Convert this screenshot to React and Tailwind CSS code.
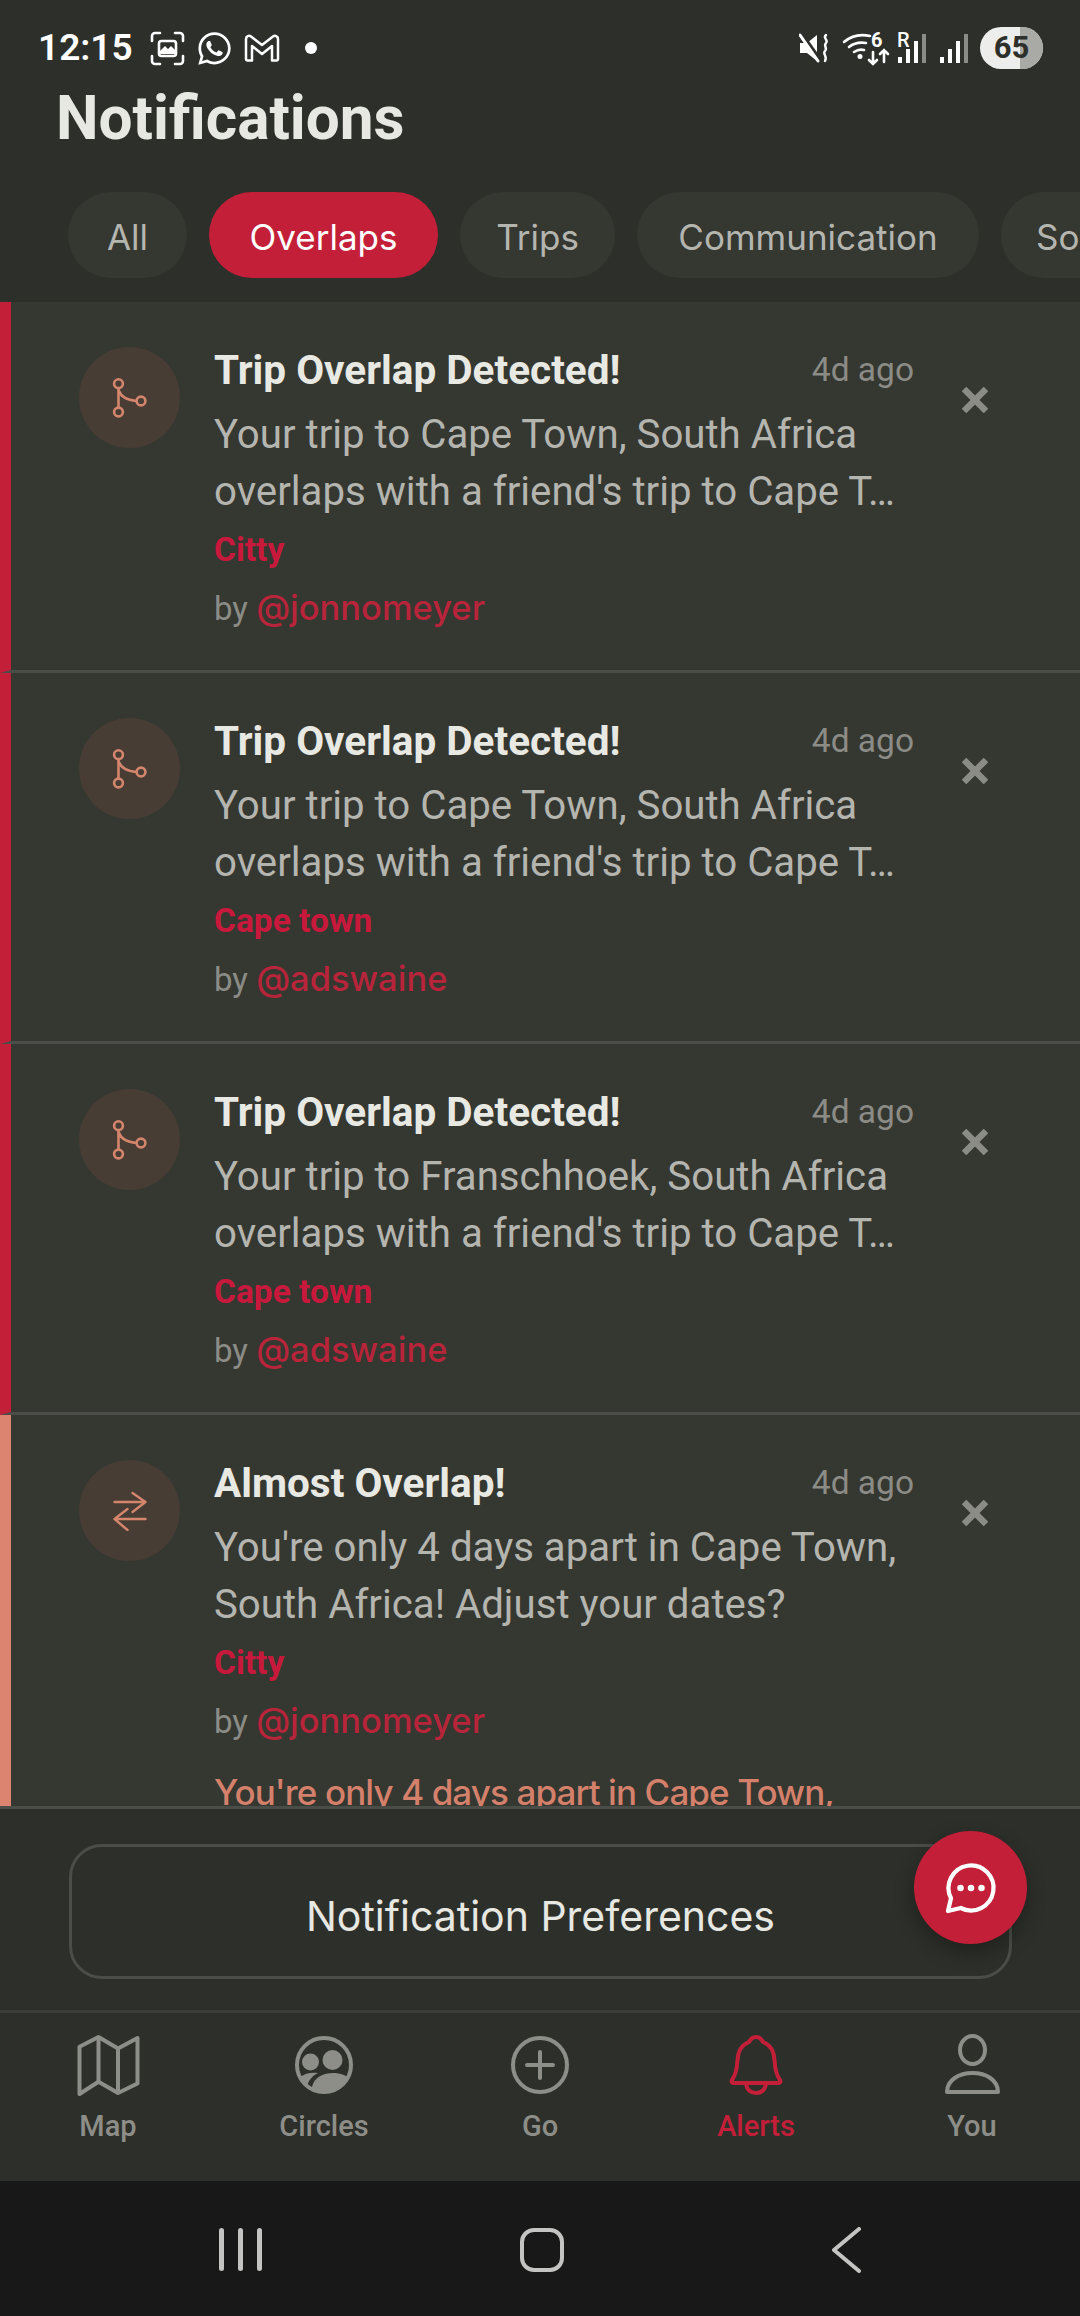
import React from 'react';
import { FaWhatsapp } from 'react-icons/fa';

const PILLS = [
  { label: 'All', width: 'w-[119px]' },
  { label: 'Overlaps', width: 'w-[229px]', active: true },
  { label: 'Trips', width: 'w-[155px]' },
  { label: 'Communication', width: 'w-[342px]' },
  { label: 'Social', width: 'w-[170px]' },
];

const CARDS = [
  { title: 'Trip Overlap Detected!', body: "Your trip to Cape Town, South Africa overlaps with a friend's trip to Cape T…", trip: 'Citty', user: '@jonnomeyer' },
  { title: 'Trip Overlap Detected!', body: "Your trip to Cape Town, South Africa overlaps with a friend's trip to Cape T…", trip: 'Cape town', user: '@adswaine' },
  { title: 'Trip Overlap Detected!', body: "Your trip to Franschhoek, South Africa overlaps with a friend's trip to Cape T…", trip: 'Cape town', user: '@adswaine' },
  { title: 'Almost Overlap!', body: "You're only 4 days apart in Cape Town, South Africa! Adjust your dates?", trip: 'Citty', user: '@jonnomeyer', almost: true, note: "You're only 4 days apart in Cape Town," },
];

function StatusLeft() {
  return (
    <div className="flex items-center text-white">
      <span className="ml-[38px] w-[92px] text-[37px] leading-[44px] font-semibold font-['Roboto',sans-serif]">12:15</span>
      {/* screenshot */}
      <svg className="ml-[20px]" width="35" height="35" viewBox="0 0 35 35" fill="none" stroke="#fff" strokeWidth="2.6" strokeLinecap="round">
        <path d="M2 10V5a3 3 0 0 1 3-3h5M25 2h5a3 3 0 0 1 3 3v5M33 25v5a3 3 0 0 1-3 3h-5M10 33H5a3 3 0 0 1-3-3v-5" />
        <rect x="9" y="10" width="17" height="15" rx="2.5" fill="#2d2f2a" />
        <path d="M10 20l5-5 3 3 3-3 4 4v4H10z" fill="#fff" stroke="none" />
      </svg>
      <FaWhatsapp className="ml-[11px]" size={37} color="#fff" />
      <svg className="ml-[11px]" width="36" height="28" viewBox="0 0 36 28" fill="none" stroke="#fff" strokeWidth="2.5" strokeLinejoin="round">
        <path d="M2 5v20a1.500 1.500 0 0 0 1.500 1.500H8V12l10 8 10-8v14.500h4.500A1.500 1.500 0 0 0 34 25V5c0-3-3-4-5-2.500L18 11 7 2.500C5 1 2 2 2 5z" />
      </svg>
      <span className="ml-[25px] w-[12px] h-[12px] rounded-full bg-white" />
    </div>
  );
}

function StatusRight() {
  return (
    <div className="flex items-center text-white">
      {/* mute */}
      <svg width="30" height="30" viewBox="0 0 30 30" fill="none">
        <path d="M1 10h7l10-8v26L8 20H1z" fill="#fff" />
        <path d="M3 1l19 27" stroke="#2d2f2a" strokeWidth="3.500" />
        <path d="M1 2l18 26" stroke="#fff" strokeWidth="3" strokeLinecap="round" />
        <path d="M27 2c-4 3 3 5 0 8s2 5-1 8 3 5 0 10" stroke="#fff" strokeWidth="2.4" strokeLinecap="round" />
      </svg>
      {/* wifi 6 */}
      <div className="relative ml-[14px] w-[44px] h-[32px]">
        <svg className="absolute left-0 top-0 overflow-visible" width="44" height="32" viewBox="0 0 44 32" fill="none" stroke="#fff" strokeWidth="2.6" strokeLinecap="round">
          <path d="M1 10c7-6 17-8 26-6" />
          <path d="M6 15c5-4 11-5 17-4" />
          <path d="M11 20c3-2 6-3 10-2" />
          <circle cx="17" cy="24.500" r="1.200" fill="#fff" />
          <path d="M30 20v12M26 28l4 4 4-4" />
          <path d="M41 30V18M37 22l4-4 4 4" />
        </svg>
        <span className="absolute left-[28px] top-[-1px] text-[20px] leading-[18px] font-bold font-['Roboto',sans-serif]">6</span>
      </div>
      {/* signal with R */}
      <div className="relative ml-[8px] w-[29px] h-[30px]">
        <span className="absolute left-[2px] top-[-2px] text-[20px] leading-[18px] font-medium font-['Roboto',sans-serif]">R</span>
        <div className="absolute left-[3px] bottom-0 flex items-end gap-[4px]">
          <span className="w-[4px] h-[6px] bg-white" />
          <span className="w-[4px] h-[14px] bg-white" />
          <span className="w-[4px] h-[22px] bg-white" />
          <span className="w-[4px] h-[29px] bg-[#8a8c87]" />
        </div>
      </div>
      {/* signal */}
      <div className="ml-[16px] flex items-end gap-[4px] h-[30px]">
        <span className="w-[4px] h-[6px] bg-white" />
        <span className="w-[4px] h-[14px] bg-white" />
        <span className="w-[4px] h-[22px] bg-white" />
        <span className="w-[4px] h-[29px] bg-[#8a8c87]" />
      </div>
      {/* battery */}
      <div className="relative ml-[12px] w-[63px] h-[42px] rounded-[21px] overflow-hidden bg-[#ededeb] flex items-center justify-center">
        <span className="absolute right-0 top-0 bottom-0 w-[23px] bg-[#a9a9a6]" />
        <span className="relative text-[#2d2f2a] text-[31px] leading-[42px] font-bold font-['Roboto',sans-serif]">65</span>
      </div>
    </div>
  );
}

function SplitIcon() {
  return (
    <svg width="40" height="40" viewBox="0 0 40 40" fill="none" stroke="#d4866c" strokeWidth="2.6" strokeLinecap="round">
      <circle cx="8.500" cy="5.700" r="4.400" />
      <circle cx="31" cy="23" r="4.400" />
      <circle cx="8.500" cy="34" r="4.400" />
      <path d="M8.500 10v19.500" />
      <path d="M9 13c2 6 8 9 17.500 10" />
    </svg>
  );
}

function SwapIcon() {
  return (
    <svg width="40" height="40" viewBox="0 0 40 40" fill="none" stroke="#d4866c" strokeWidth="2.4" strokeLinecap="round" strokeLinejoin="round">
      <path d="M4.500 11h31M22.500 2l13 9-13 10" />
      <path d="M35.500 28h-31M17.500 18L4.500 28l13 11" />
    </svg>
  );
}

function Card({ title, body, trip, user, almost, note }) {
  return (
    <div className={`flex-shrink-0 flex bg-[#353731] border-l-[11px] pl-[68px] pt-[45px] ${almost ? 'border-[#dd8470] h-[420px]' : 'border-[#c41f38] border-b-[3px] border-b-[#4b4d48] h-[371px]'}`}>
      <div className="w-[101px] h-[101px] rounded-full bg-[#473d35] flex items-center justify-center flex-shrink-0">
        {almost ? <SwapIcon /> : <SplitIcon />}
      </div>
      <div className="ml-[34px] w-[700px] pt-[1px] flex-shrink-0 font-['Roboto',sans-serif]">
        <div className="flex items-center justify-between h-[44px]">
          <span className="text-[40.500px] leading-[44px] font-bold text-[#e9e9e4]">{title}</span>
          <span className="text-[33.500px] leading-[44px] text-[#8c8c87]">4d ago</span>
        </div>
        <p className="mt-[14px] text-[40.200px] leading-[57px] text-[#b5b5b0]">{body}</p>
        <p className="mt-[8px] text-[33.500px] leading-[44px] font-bold text-[#c8193c]">{trip}</p>
        <p className="mt-[14px] text-[33px] leading-[44px] text-[#8c8c87]">
          by <span className="text-[34.500px] font-medium text-[#b8243a] font-['Inter',sans-serif]">{user}</span>
        </p>
        {note && <p className="mt-[26px] text-[35px] tracking-[-0.9px] leading-[44px] font-medium text-[#d4806a] font-['Inter',sans-serif]">{note}</p>}
      </div>
      <svg className="ml-[48px] mt-[40px] flex-shrink-0" width="26" height="26" viewBox="0 0 26 26" stroke="#8c8c87" strokeWidth="6.500">
        <path d="M2 2l22 22M24 2L2 24" />
      </svg>
    </div>
  );
}

function NavItem({ label, active, children }) {
  return (
    <div className={`flex flex-col items-center ${active ? 'text-[#c41f38]' : 'text-[#8e8e89]'}`}>
      <div className="h-[62px] flex items-center justify-center">{children}</div>
      <span className="mt-[12px] text-[29px] leading-[36px] font-medium font-['Roboto',sans-serif]">{label}</span>
    </div>
  );
}

export default function App() {
  return (
    <div className="relative w-[1080px] h-[2316px] overflow-hidden flex flex-col bg-[#2d2f2a]">
      <div className="h-[96px] flex items-center justify-between pr-[37px] flex-shrink-0">
        <StatusLeft />
        <StatusRight />
      </div>

      <h1 className="pl-[56px] h-[46px] text-[60.300px] leading-[46px] font-bold text-[#e8e8e3] font-['Roboto',sans-serif] flex-shrink-0">Notifications</h1>

      <div className="mt-[50px] mb-[24px] pl-[68px] flex gap-[22px] overflow-hidden flex-shrink-0">
        {PILLS.map(p => (
          <div
            key={p.label}
            className={`h-[86px] pt-[4px] rounded-full flex items-center justify-center flex-shrink-0 text-[35px] font-['Inter',sans-serif] ${p.width} ${p.active ? 'bg-[#c41f38] text-white' : 'bg-[#353731] text-[#b5b5b0]'}`}
          >
            {p.label}
          </div>
        ))}
      </div>

      <div className="flex-1 min-h-0 overflow-hidden flex flex-col border-b-[3px] border-[#4b4d48]">
        {CARDS.map((c, i) => <Card key={i} {...c} />)}
      </div>

      <div className="h-[204px] flex-shrink-0 pt-[35px] pl-[69px] border-b-[3px] border-[#3b3d38]">
        <button className="w-[943px] h-[135px] pt-[11px] rounded-[33px] border-[3px] border-[#4b4d48] text-[41px] text-[#e8e8e3] font-['Inter',sans-serif]">
          Notification Preferences
        </button>
      </div>

      <div className="h-[168px] flex-shrink-0 grid grid-cols-5 pt-[21px]">
        <NavItem label="Map">
          <svg width="63" height="62" viewBox="0 0 63 62" fill="none" stroke="currentColor" strokeWidth="4" strokeLinejoin="round">
            <path d="M2.500 12.700L21.500 3 41 14.500 60.500 4v45.500L41 59 21.500 47.700 2.500 60z" />
            <path d="M21.500 3v44.700M41 14.500V59" />
          </svg>
        </NavItem>
        <NavItem label="Circles">
          <svg width="60" height="60" viewBox="0 0 60 60" fill="none">
            <defs>
              <clipPath id="circlesClip"><circle cx="30" cy="30" r="27" /></clipPath>
            </defs>
            <circle cx="30" cy="30" r="27" stroke="currentColor" strokeWidth="4" />
            <circle cx="16.500" cy="27" r="8.500" fill="currentColor" />
            <circle cx="38.500" cy="25" r="10" fill="currentColor" />
            <g clipPath="url(#circlesClip)" fill="currentColor">
              <path d="M18 52c2-10 12-14 21-14 8 0 15 3 19 8v14H18z" />
              <path d="M6 42c5-4 12-5 18-4-6 3-10 8-11 14l-9-2z" />
            </g>
          </svg>
        </NavItem>
        <NavItem label="Go">
          <svg width="60" height="60" viewBox="0 0 60 60" fill="none" stroke="currentColor" strokeWidth="4" strokeLinecap="round">
            <circle cx="30" cy="30" r="27" />
            <path d="M30 17v26M17 30h26" />
          </svg>
        </NavItem>
        <NavItem label="Alerts" active>
          <svg width="54" height="62" viewBox="0 0 54 62" fill="none" stroke="currentColor" strokeWidth="4" strokeLinejoin="round" strokeLinecap="round">
            <path d="M27 3c4 0 6 3 7 5 8 3 11 10 11.500 18 .5 10 2.500 16 5.500 20 1 2 0 3-2 3H5c-2 0-3-1-2-3 3-4 5-10 5.500-20C9 18 12 11 20 8c1-2 3-5 7-5z" />
            <path d="M17 50c1 6 5 9 10 9s9-3 10-9" />
          </svg>
        </NavItem>
        <NavItem label="You">
          <svg width="57" height="62" viewBox="0 0 57 62" fill="none" stroke="currentColor" strokeWidth="4" strokeLinejoin="round">
            <ellipse cx="28.500" cy="16" rx="12.500" ry="14" />
            <path d="M3 58c0-12 12-19 25.500-19S54 46 54 58z" />
          </svg>
        </NavItem>
      </div>

      <div className="h-[135px] flex-shrink-0 pt-[2px] bg-[#171817] flex items-center justify-center">
        <div className="flex items-center w-[642px] justify-between">
          <div className="flex gap-[14px]">
            <span className="w-[5px] h-[43px] rounded-full bg-[#c4c4c2]" />
            <span className="w-[5px] h-[43px] rounded-full bg-[#c4c4c2]" />
            <span className="w-[5px] h-[43px] rounded-full bg-[#c4c4c2]" />
          </div>
          <span className="mr-[9px] w-[44px] h-[44px] rounded-[14px] border-[4px] border-[#c4c4c2]" />
          <svg width="30" height="46" viewBox="0 0 30 46" fill="none" stroke="#c4c4c2" strokeWidth="4" strokeLinecap="round" strokeLinejoin="round">
            <path d="M28 2L3 23l25 21" />
          </svg>
        </div>
      </div>

      {/* chat bubble */}
      <div className="absolute left-[914px] top-[1831px] w-[113px] h-[113px] rounded-full bg-[#c41f38] flex items-center justify-center shadow-[0_8px_20px_rgba(0,0,0,0.3)]">
        <svg width="60" height="60" viewBox="0 0 24 24" fill="none" stroke="#fff" strokeWidth="1.700" strokeLinecap="round" strokeLinejoin="round">
          <path d="M7.900 20A9 9 0 1 0 4 16.100L2.800 21.200z" />
          <circle cx="7.800" cy="12" r="1.300" fill="#fff" stroke="none" />
          <circle cx="12" cy="12" r="1.300" fill="#fff" stroke="none" />
          <circle cx="16.200" cy="12" r="1.300" fill="#fff" stroke="none" />
        </svg>
      </div>
    </div>
  );
}
